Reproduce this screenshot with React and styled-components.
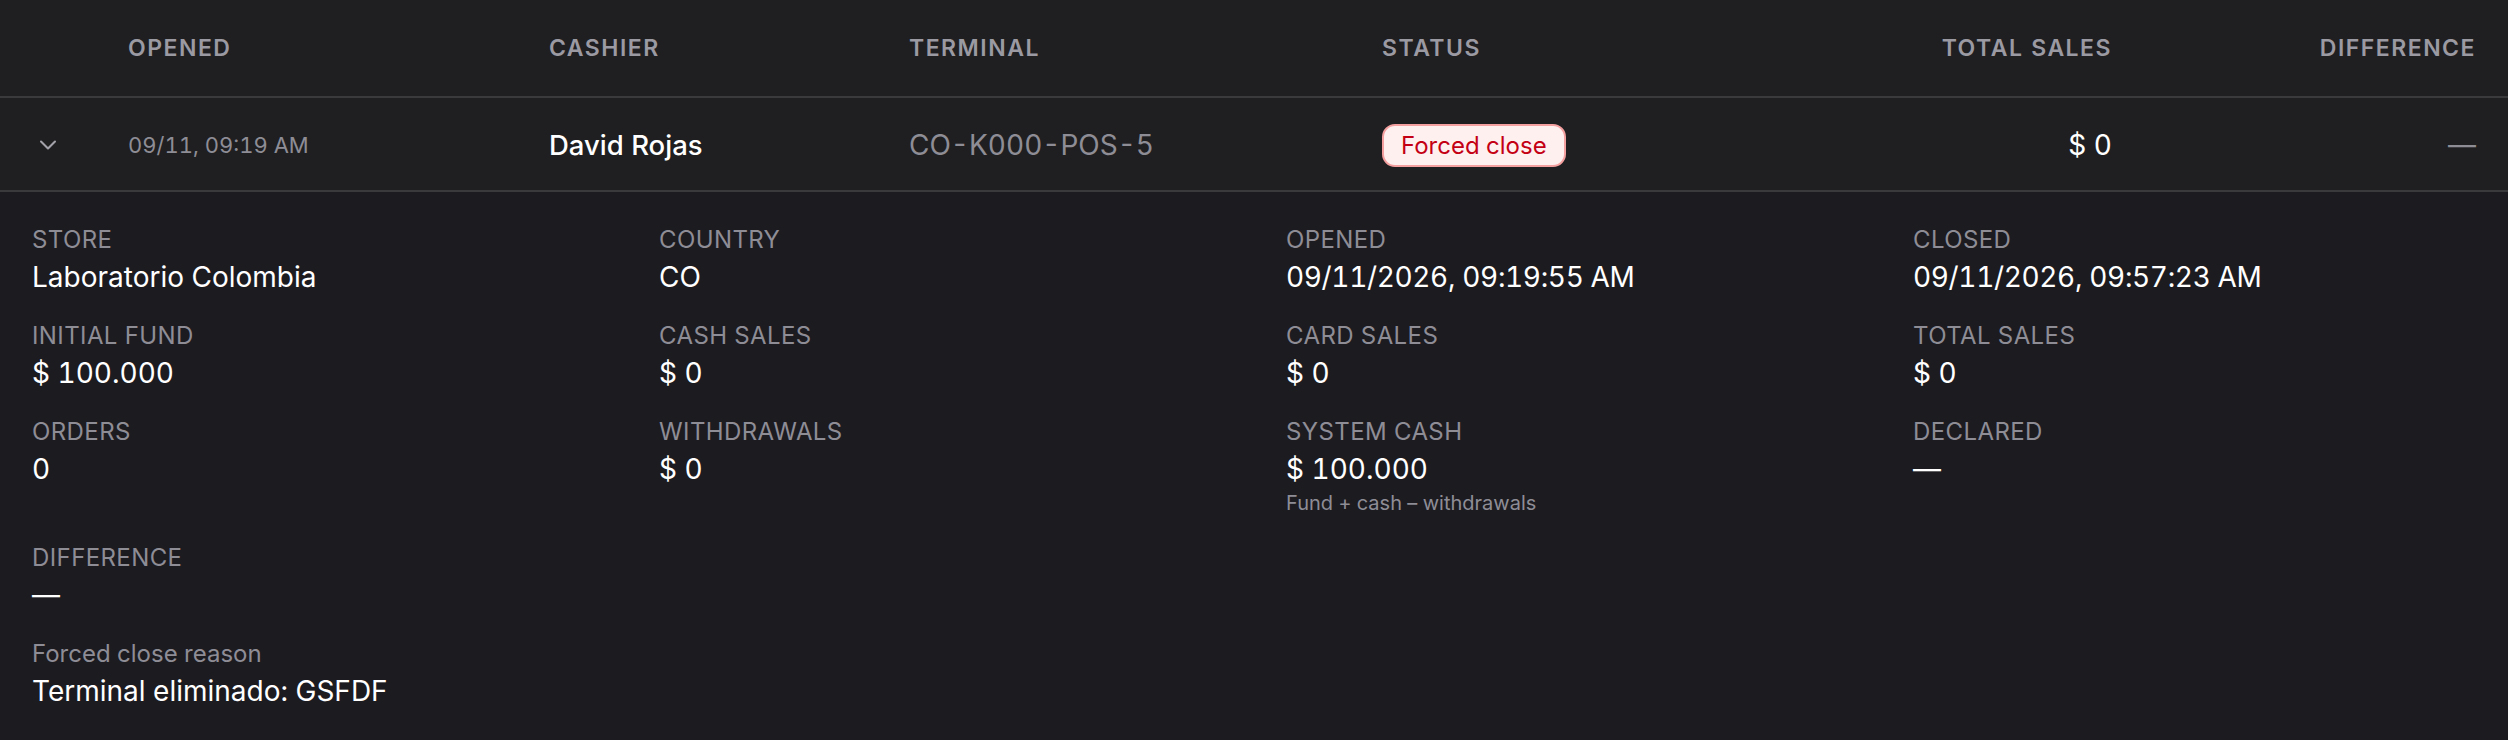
import React from "react";
import styled, { createGlobalStyle } from "styled-components";

const Global = createGlobalStyle`
  html, body { margin: 0; padding: 0; background: #1c1b20; }
  body {
    font-family: Inter, "Noto Sans", sans-serif;
    font-variant-numeric: tabular-nums;
    -webkit-font-smoothing: antialiased;
  }
  * { box-sizing: border-box; }
`;

const Table = styled.div`
  width: 2508px;
  background: #1f1f21;
`;

const cols = "96px 421px 360px 473px 418px 312px 364px";

const HeadRow = styled.div`
  display: grid;
  grid-template-columns: ${cols};
  align-items: center;
  height: 98px;
  padding: 0 32px;
  border-bottom: 2px solid #3a3a3d;
`;

const HeadCell = styled.div`
  font-size: 23px;
  font-weight: 600;
  letter-spacing: 1.5px;
  color: #9b9aa3;
  text-transform: uppercase;
  text-align: ${(p) => (p.$right ? "right" : "left")};
`;

const DataRow = styled.div`
  display: grid;
  grid-template-columns: ${cols};
  align-items: center;
  height: 94px;
  padding: 2px 32px 0;
  border-bottom: 2px solid #3a3a3d;
`;

const Cell = styled.div`
  font-size: ${(p) => p.$size || 28}px;
  font-weight: ${(p) => p.$weight || 400};
  letter-spacing: ${(p) => p.$spacing || 0}px;
  color: ${(p) => (p.$muted ? "#8e8d96" : "#ffffff")};
  text-align: ${(p) => (p.$right ? "right" : "left")};
  white-space: nowrap;
`;

const Chevron = styled.div`
  display: flex;
  align-items: center;
  color: #a3a2aa;
  padding-left: 2px;
`;

const Badge = styled.span`
  display: inline-flex;
  align-items: center;
  height: 43px;
  padding: 0 17px;
  border: 2px solid #f5a0a0;
  border-radius: 13px;
  background: #fff0f0;
  color: #c40014;
  font-size: 24px;
  font-weight: 400;
`;

const Details = styled.div`
  background: #1c1b20;
  padding: 34px 32px 33px;
`;

const Grid = styled.div`
  display: grid;
  grid-template-columns: repeat(4, 1fr);
  column-gap: 64px;
  row-gap: 29.5px;
`;

const Item = styled.div`
  display: flex;
  flex-direction: column;
`;

const Label = styled.div`
  font-size: 24px;
  line-height: 28px;
  color: #8e8d96;
  text-transform: ${(p) => (p.$plain ? "none" : "uppercase")};
  letter-spacing: ${(p) => (p.$plain ? "0" : "0.4px")};
`;

const Value = styled.div`
  margin-top: 6.5px;
  font-size: 28px;
  line-height: 32px;
  letter-spacing: ${(p) => (p.$tight ? "-0.35px" : "0")};
  color: #ffffff;
`;

const Sub = styled.div`
  margin-top: 6px;
  font-size: 20px;
  line-height: 24px;
  color: #8e8d96;
`;

const Reason = styled(Item)`
  margin-top: 29.5px;
`;

const fields = [
  ["Store", "Laboratorio Colombia"],
  ["Country", "CO"],
  ["Opened", "09/11/2026, 09:19:55 AM", null, true],
  ["Closed", "09/11/2026, 09:57:23 AM", null, true],
  ["Initial fund", "$ 100.000"],
  ["Cash sales", "$ 0"],
  ["Card sales", "$ 0"],
  ["Total sales", "$ 0"],
  ["Orders", "0"],
  ["Withdrawals", "$ 0"],
  ["System cash", "$ 100.000", "Fund + cash – withdrawals"],
  ["Declared", "—"],
  ["Difference", "—"],
];

export default function App() {
  return (
    <>
      <Global />
      <Table>
        <HeadRow>
          <div />
          <HeadCell>Opened</HeadCell>
          <HeadCell>Cashier</HeadCell>
          <HeadCell>Terminal</HeadCell>
          <HeadCell>Status</HeadCell>
          <HeadCell $right>Total sales</HeadCell>
          <HeadCell $right>Difference</HeadCell>
        </HeadRow>
        <DataRow>
          <Chevron>
            <svg width="28" height="28" viewBox="0 0 24 24" fill="none" stroke="currentColor" strokeWidth="1.8" strokeLinecap="round" strokeLinejoin="round">
              <path d="M6 9l6 6 6-6" />
            </svg>
          </Chevron>
          <Cell $muted $size={22}>09/11, 09:19 AM</Cell>
          <Cell $weight={500} $size={27.5}>David Rojas</Cell>
          <Cell $muted>CO-K000-POS-5</Cell>
          <div>
            <Badge>Forced close</Badge>
          </div>
          <Cell $right>$ 0</Cell>
          <Cell $right $muted>—</Cell>
        </DataRow>
      </Table>
      <Details>
        <Grid>
          {fields.map(([l, v, s, tight]) => (
            <Item key={l}>
              <Label>{l}</Label>
              <Value $tight={tight}>{v}</Value>
              {s && <Sub>{s}</Sub>}
            </Item>
          ))}
        </Grid>
        <Reason>
          <Label $plain>Forced close reason</Label>
          <Value>Terminal eliminado: GSFDF</Value>
        </Reason>
      </Details>
    </>
  );
}
